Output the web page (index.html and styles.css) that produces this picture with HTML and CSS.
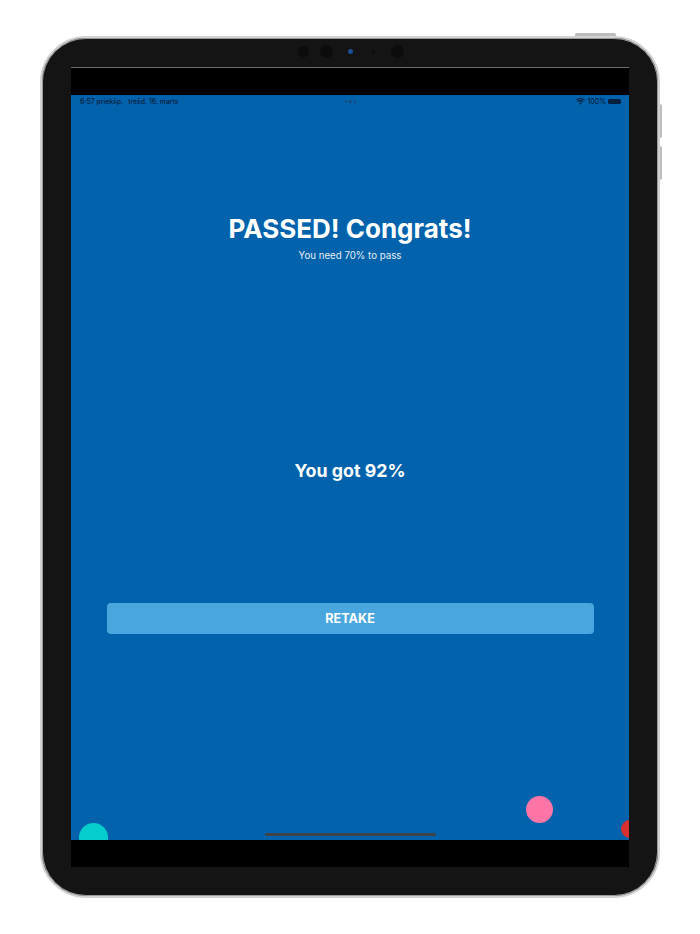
FILE: index.html
```html
<!DOCTYPE html>
<html lang="lv">
<head>
<meta charset="utf-8">
<title>Result</title>
<link rel="stylesheet" href="styles.css">
</head>
<body>
<div class="device">
  <span class="hw hw-top"></span>
  <span class="hw hw-vol1"></span>
  <span class="hw hw-vol2"></span>
  <div class="sensors">
    <span class="sensor s1"></span>
    <span class="sensor s2"></span>
    <span class="sensor s3"></span>
    <span class="sensor s4"></span>
    <span class="sensor s5"></span>
  </div>
  <div class="screen">
    <div class="bar bar-top"></div>
    <main class="app">
      <div class="status">
        <div class="status-left"><span>6:57 priekšp.</span><span>trešd. 16. marts</span></div>
        <div class="dots"><i></i><i></i><i></i></div>
        <div class="status-right">
          <svg class="wifi" width="9" height="7" viewBox="0 0 18 14"><path d="M9 13.5 6.2 10.4a4 4 0 0 1 5.6 0zM4.6 8.7 3 7a8.6 8.6 0 0 1 12 0l-1.600 1.700a6.300 6.300 0 0 0-8.800 0zM1.600 5.500 0 3.800a13 13 0 0 1 18 0l-1.600 1.700a10.700 10.700 0 0 0-14.800 0z" fill="#04203f"/></svg>
          <span>100%</span>
          <span class="battery"></span>
        </div>
      </div>
      <div class="head">
        <h1>PASSED! Congrats!</h1>
        <p>You need 70% to pass</p>
      </div>
      <div class="score">You got 92%</div>
      <button class="retake" type="button">RETAKE</button>
      <span class="dot teal"></span>
      <span class="dot pink"></span>
      <span class="dot red"></span>
      <span class="home"></span>
    </main>
    <div class="bar bar-bottom"></div>
  </div>
</div>
</body>
</html>
```
FILE: styles.css
```css
* { box-sizing: border-box; }
html, body { margin: 0; height: 100%; background: #fff; }
body {
  padding: 36px 0 0 40px;
  display: flex;
  align-items: flex-start;
  font-family: Inter, "Liberation Sans", sans-serif;
  overflow: hidden;
}
.device {
  position: relative;
  flex: none;
  width: 620px;
  height: 862px;
  padding: 29px;
  background: #141414;
  border: 2px solid #d2d2d2;
  border-radius: 46px;
  box-shadow: inset 0 0 0 1px #9a9a9a;
}
.hw { position: absolute; background: #bdbdbd; }
.hw-top { top: -5px; right: 42px; width: 41px; height: 3px; border-radius: 2px 2px 0 0; }
.hw-vol1 { top: 66px; right: -4px; width: 2px; height: 34px; border-radius: 0 2px 2px 0; }
.hw-vol2 { top: 108px; right: -4px; width: 2px; height: 34px; border-radius: 0 2px 2px 0; }
.sensors {
  position: absolute;
  top: 6px;
  left: 255.500px;
  display: flex;
  align-items: center;
  height: 14px;
}
.sensor { display: block; border-radius: 50%; background: #0c0c0c; }
.s1 { width: 11px; height: 11px; }
.s2 { width: 13px; height: 13px; margin-left: 11px; }
.s3 { width: 5px; height: 5px; margin-left: 15px; background: #1c4f96; }
.s4 { width: 3px; height: 3px; margin-left: 19px; }
.s5 { width: 13px; height: 13px; margin-left: 16px; }
.screen {
  display: flex;
  flex-direction: column;
  height: 100%;
  border-top: 1px solid #6b6b6b;
}
.bar { background: #000; flex: none; height: 27px; }
.app {
  position: relative;
  flex: 1;
  overflow: hidden;
  background: #0263ac;
  display: flex;
  flex-direction: column;
  align-items: center;
  color: #fff;
}
.status {
  align-self: stretch;
  display: flex;
  justify-content: space-between;
  align-items: center;
  height: 13px;
  padding: 0 8px 0 9px;
  font-size: 6.900px;
  font-weight: 500;
  color: #04203f;
}
.status-left { display: flex; gap: 5px; flex: 1; }
.status-right { display: flex; gap: 2px; align-items: center; flex: 1; justify-content: flex-end; }
.dots { display: flex; gap: 2px; }
.dots i { display: block; width: 2.500px; height: 2.500px; border-radius: 50%; background: #174a84; }
.battery {
  display: block;
  width: 13px;
  height: 5px;
  border-radius: 1.500px;
  background: #04203f;
}
.head { margin-top: 105px; text-align: center; }
h1 {
  margin: 0;
  font-size: 26px;
  line-height: 32px;
  font-weight: 700;
}
.head p {
  margin: 4px 0 0;
  font-size: 9.700px;
  line-height: 14px;
  font-weight: 400;
  color: #e6eef7;
}
.score {
  margin-top: 196px;
  font-size: 17.800px;
  line-height: 24px;
  font-weight: 700;
}
.retake {
  margin-top: 120px;
  width: 487px;
  height: 31px;
  border: 0;
  border-radius: 4px;
  background: #4aa6de;
  color: #fff;
  font-family: inherit;
  font-size: 12.700px;
  font-weight: 700;
}
.dot { position: absolute; display: block; border-radius: 50%; }
.teal { left: 8px; top: 728px; width: 29px; height: 29px; background: #03cdcd; }
.pink { left: 455px; top: 701px; width: 27px; height: 27px; background: #fd74a6; }
.red { left: 550px; top: 725px; width: 18px; height: 18px; background: #d8302f; }
.home {
  position: absolute;
  left: 194px;
  bottom: 4px;
  width: 171px;
  height: 3px;
  border-radius: 2px;
  background: #3f444b;
}
```
